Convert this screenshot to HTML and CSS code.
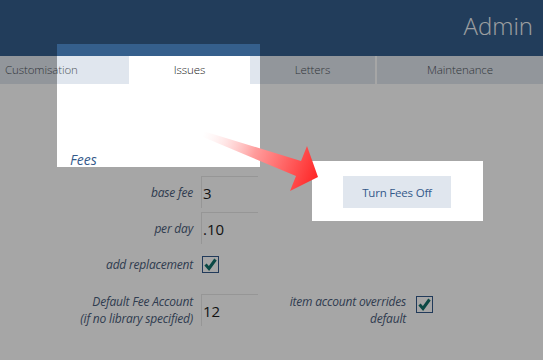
FILE: index.html
```html
<!DOCTYPE html>
<html lang="en">
<head>
    <meta charset="UTF-8">
    <meta name="viewport" content="width=device-width, initial-scale=1.0">
    <title>Admin - Issues</title>
    <link rel="stylesheet" href="styles.css">
</head>
<body>
    <div class="page">
        <header class="header">
            <h1>Admin</h1>
        </header>
        <nav class="tabs">
            <div class="tab tab-first">Customisation</div>
            <div class="tab tab-active">Issues</div>
            <div class="tab tab-letters">Letters</div>
            <div class="tab tab-last">Maintenance</div>
        </nav>

        <section class="fees">
            <h2>Fees</h2>
            <div class="row">
                <label class="label">base fee</label>
                <input class="field" type="text" value="3">
                <button class="fee-toggle">Turn Fees Off</button>
            </div>
            <div class="row">
                <label class="label">per day</label>
                <input class="field" type="text" value=".10">
            </div>
            <div class="row row-check">
                <label class="label">add replacement</label>
                <span class="check">
                    <svg width="17" height="17" viewBox="0 0 17 17"><path d="M3.5 8.5 L7 12.5 L13.5 3.5" fill="none" stroke="#12716a" stroke-width="3"/></svg>
                </span>
            </div>
            <div class="row row-account">
                <label class="label">Default Fee Account<br>(if no library specified)</label>
                <input class="field" type="text" value="12">
                <label class="label label-right">item account overrides<br>default</label>
                <span class="check">
                    <svg width="17" height="17" viewBox="0 0 17 17"><path d="M3.5 8.5 L7 12.5 L13.5 3.5" fill="none" stroke="#12716a" stroke-width="3"/></svg>
                </span>
            </div>
        </section>

        <!-- tour overlay: dims page, two highlighted holes and the pointer arrow -->
        <svg class="overlay" width="543" height="360" viewBox="0 0 543 360">
            <defs>
                <linearGradient id="arrowFill" gradientUnits="userSpaceOnUse" x1="203" y1="133" x2="318" y2="177">
                    <stop offset="0" stop-color="#ffffff" stop-opacity="0.3"/>
                    <stop offset="0.45" stop-color="#ff9c9c"/>
                    <stop offset="1" stop-color="#ff2626"/>
                </linearGradient>
            </defs>
            <path fill="rgba(0,0,0,0.35)" fill-rule="evenodd"
                  d="M0 0H543V360H0Z M57 44H260V167H57Z M312 161H483V221H312Z"/>
            <polygon fill="url(#arrowFill)"
                     points="203,131 301,161 307,146 318,177 290,191 296,176 203,137"/>
        </svg>
    </div>
</body>
</html>
```

FILE: styles.css
```css
body {
    margin: 0;
    background-color: #fff;
    font-family: "Open Sans", "DejaVu Sans", sans-serif;
}
.page {
    position: relative;
    width: 543px;
    height: 360px;
    overflow: hidden;
}
.header {
    height: 56px;
    background-color: #355f8c;
    text-align: right;
}
.header h1 {
    margin: 0;
    padding: 9px 10px 0 0;
    font-size: 24px;
    font-weight: 300;
    line-height: 33px;
    color: #f2f5f8;
}
.tabs {
    display: flex;
    height: 28px;
    background-color: #fff;
}
.tab {
    height: 28px;
    line-height: 28px;
    font-size: 11.5px;
    font-weight: 300;
    letter-spacing: -0.1px;
    text-align: center;
    color: #4f555c;
    background-color: #e0e6ee;
    box-sizing: border-box;
}
.tab-first {
    width: 129px;
    padding-left: 5px;
    text-align: left;
}
.tab-active {
    width: 121px;
    background-color: #fff;
    color: #222;
}
.tab-letters {
    width: 125px;
    margin-right: 2px;
}
.tab-last {
    flex: 1;
}
.fees {
    padding-top: 66px;
}
.fees h2 {
    margin: 0 0 6px 70px;
    font-size: 14px;
    font-weight: 400;
    font-style: italic;
    line-height: 20px;
    color: #34598a;
}
.row {
    display: flex;
    align-items: center;
    min-height: 32px;
    margin-bottom: 4px;
}
.row-check {
    min-height: 33px;
    margin-bottom: 12px;
}
.label {
    width: 193px;
    margin-right: 8px;
    text-align: right;
    font-size: 12px;
    font-style: italic;
    font-weight: 400;
    letter-spacing: -0.2px;
    line-height: 17px;
    color: #4a5c7a;
}
.field {
    width: 57px;
    height: 32px;
    box-sizing: border-box;
    padding: 0 0 0 1px;
    border: none;
    border-top: 1px solid #e6e6e6;
    border-left: 1px solid #e6e6e6;
    background: transparent;
    font-family: inherit;
    font-size: 15px;
    color: #1c1c1c;
    outline: none;
}
.fee-toggle {
    margin-left: 85px;
    width: 108px;
    height: 32px;
    border: none;
    background-color: #e0e6ee;
    font-family: inherit;
    font-size: 11.5px;
    letter-spacing: -0.2px;
    color: #34598a;
}
.check {
    display: block;
    width: 17px;
    height: 17px;
    margin-left: 1px;
    box-sizing: border-box;
    border: 1px solid #34598a;
}
.check svg {
    display: block;
    margin: -1px 0 0 -1px;
}
.label-right {
    width: 148px;
    margin-right: 10px;
}
.row-account .check {
    align-self: flex-start;
    margin-left: 0;
    margin-top: 3px;
}
.overlay {
    position: absolute;
    left: 0;
    top: 0;
    pointer-events: none;
}
```
